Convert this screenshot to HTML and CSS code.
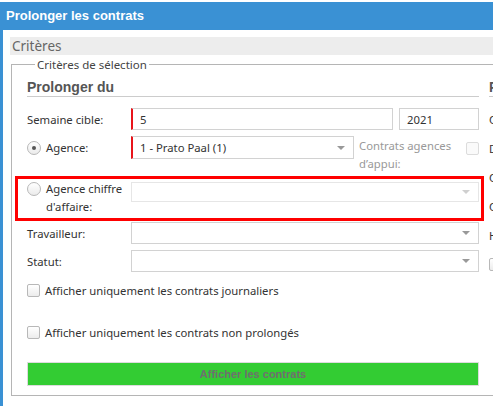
FILE: index.html
```html
<!DOCTYPE html>
<html lang="fr">
<head>
<meta charset="utf-8">
<title>Prolonger les contrats</title>
<link rel="stylesheet" href="styles.css">
</head>
<body>
<div class="window">
  <div class="titlebar">Prolonger les contrats</div>
  <div class="content">
    <div class="section-bar">Critères</div>
    <fieldset class="criteria">
      <legend>Critères de sélection</legend>
      <div class="columns">
        <div class="col-main">
          <h2 class="col-title">Prolonger du</h2>

          <div class="row row-first">
            <span class="label">Semaine cible:</span>
            <div class="input required wide"><span class="value">5</span></div>
            <div class="input year"><span class="value">2021</span></div>
          </div>

          <div class="row row-agence">
            <label class="label radio-label"><span class="radio checked"></span>Agence:</label>
            <div class="input required select mid"><span class="value">1 - Prato Paal (1)</span><span class="arrow"></span></div>
            <span class="muted-label">Contrats agences d’appui:</span>
            <span class="checkbox disabled"></span>
          </div>

          <div class="row row-chiffre">
            <label class="label radio-label two-lines"><span class="radio"></span><span>Agence chiffre<br>d'affaire:</span></label>
            <div class="input select full disabled"><span class="arrow"></span></div>
            <div class="highlight"></div>
          </div>

          <div class="row">
            <span class="label">Travailleur:</span>
            <div class="input select full"><span class="arrow"></span></div>
          </div>

          <div class="row">
            <span class="label">Statut:</span>
            <div class="input select full"><span class="arrow"></span></div>
          </div>

          <label class="check-row check-first"><span class="checkbox"></span>Afficher uniquement les contrats journaliers</label>
          <label class="check-row check-second"><span class="checkbox"></span>Afficher uniquement les contrats non prolongés</label>

          <button class="show-btn" type="button">Afficher les contrats</button>
        </div>

        <div class="col-side">
          <h2 class="col-title">Prolonger au</h2>
          <div class="side-row first">Contrat:</div>
          <div class="side-row">Date:</div>
          <div class="side-row">Coefficient:</div>
          <div class="side-row">Commentaire:</div>
          <div class="side-row">Heures:</div>
          <div class="side-row"><span class="checkbox"></span></div>
        </div>
      </div>
    </fieldset>
  </div>
</div>
</body>
</html>
```

FILE: styles.css
```css
html, body {
  margin: 0;
  padding: 0;
  overflow: hidden;
  background: #fff;
}

body {
  width: 493px;
  height: 406px;
  font-family: "Noto Sans", "Open Sans", sans-serif;
  font-size: 11.3px;
  color: #333;
}

.window {
  margin-top: 2px;
  width: 900px;
  height: 420px;
  border-left: 3px solid #3a91d4;
  box-sizing: border-box;
}

.titlebar {
  height: 28px;
  line-height: 28px;
  background: #3a91d4;
  color: #fff;
  font-family: "Liberation Sans", Arial, sans-serif;
  font-weight: bold;
  font-size: 13px;
  padding-left: 3px;
}

.content {
  padding: 7px 0 0 7px;
}

.section-bar {
  height: 18px;
  line-height: 18px;
  background: #ededed;
  color: #666;
  font-size: 13.5px;
  padding-left: 2px;
}

.criteria {
  margin: 2px 0 0 1px;
  border: 1px solid #b5b5b5;
  padding: 0 0 9px 15px;
}

.criteria legend {
  padding: 0 2px;
  margin-left: 8px;
  color: #444;
  font-size: 11.5px;
  line-height: 15px;
}

.columns {
  display: flex;
  gap: 10px;
}

.col-main {
  width: 452px;
  flex-shrink: 0;
}

.col-side {
  width: 300px;
  flex-shrink: 0;
}

.col-title {
  margin: 6px 0 0;
  font-family: "Liberation Sans", Arial, sans-serif;
  font-size: 14px;
  font-weight: bold;
  color: #555;
  line-height: 18px;
  border-bottom: 1px solid #ccc;
  padding-bottom: 0;
}

.row {
  position: relative;
  display: flex;
  align-items: center;
  height: 22px;
  margin-top: 6px;
}

.row-first {
  margin-top: 11px;
}

.row-agence {
  height: 23px;
}

.row-chiffre {
  align-items: flex-start;
  height: 36px;
  margin-top: 21px;
}

.label {
  width: 104px;
  flex-shrink: 0;
  display: flex;
  align-items: center;
}

.radio-label {
  gap: 5px;
}

.two-lines {
  align-items: flex-start;
  line-height: 18px;
}

.two-lines .radio {
  margin-top: 2px;
}

.radio {
  width: 12px;
  height: 12px;
  border: 1px solid #b8b8b8;
  border-radius: 50%;
  background: linear-gradient(#fff, #ebebeb);
  flex-shrink: 0;
  position: relative;
}

.radio.checked::after {
  content: "";
  position: absolute;
  left: 4px;
  top: 4px;
  width: 4px;
  height: 4px;
  border-radius: 50%;
  background: #555;
}

.input {
  position: relative;
  height: 100%;
  box-sizing: border-box;
  border: 1px solid #d2d2d2;
  background: #fff;
  display: flex;
  align-items: center;
  padding-left: 7px;
}

.input.required {
  border-left: 2px solid #e8141b;
}

.input.wide {
  width: 262px;
}

.input.year {
  width: 80px;
  margin-left: 6px;
}

.input.mid {
  width: 223px;
}

.input.full {
  width: 348px;
}

.row-chiffre .input {
  height: 20px;
  margin-top: 2px;
}

.input.disabled {
  border-color: #e6e6e6;
}

.arrow {
  position: absolute;
  right: 8px;
  top: 50%;
  margin-top: -2px;
  width: 0;
  height: 0;
  border-left: 4px solid transparent;
  border-right: 4px solid transparent;
  border-top: 4px solid #999;
}

.disabled .arrow {
  border-top-color: #cfcfcf;
}

.muted-label {
  align-self: flex-start;
  margin-top: 1px;
  margin-left: 5px;
  width: 100px;
  color: #999;
  line-height: 18px;
}

.checkbox {
  display: inline-block;
  width: 11px;
  height: 11px;
  border: 1px solid #b8b8b8;
  border-radius: 2px;
  background: linear-gradient(#fff, #ececec);
  flex-shrink: 0;
}

.checkbox.disabled {
  border-color: #dcdcdc;
  background: #fafafa;
  margin-left: 7px;
  align-self: flex-start;
  margin-top: 6px;
}

.highlight {
  position: absolute;
  left: -12px;
  right: -5px;
  top: -4px;
  bottom: -5px;
  border: 3px solid #f00;
  pointer-events: none;
}

.check-row {
  display: flex;
  align-items: center;
  gap: 5px;
  height: 16px;
}

.check-first {
  margin-top: 10px;
}

.check-second {
  margin-top: 26px;
}

.show-btn {
  display: block;
  width: 452px;
  height: 24px;
  margin-top: 22px;
  border: 1px solid #dcdcdc;
  background: #33cc33;
  color: #6f6f6f;
  font-family: "Liberation Sans", Arial, sans-serif;
  font-size: 11px;
  font-weight: bold;
  padding: 0;
}

.side-row {
  height: 22px;
  display: flex;
  align-items: center;
  margin-top: 7px;
}

.side-row.first {
  margin-top: 11px;
}
```
